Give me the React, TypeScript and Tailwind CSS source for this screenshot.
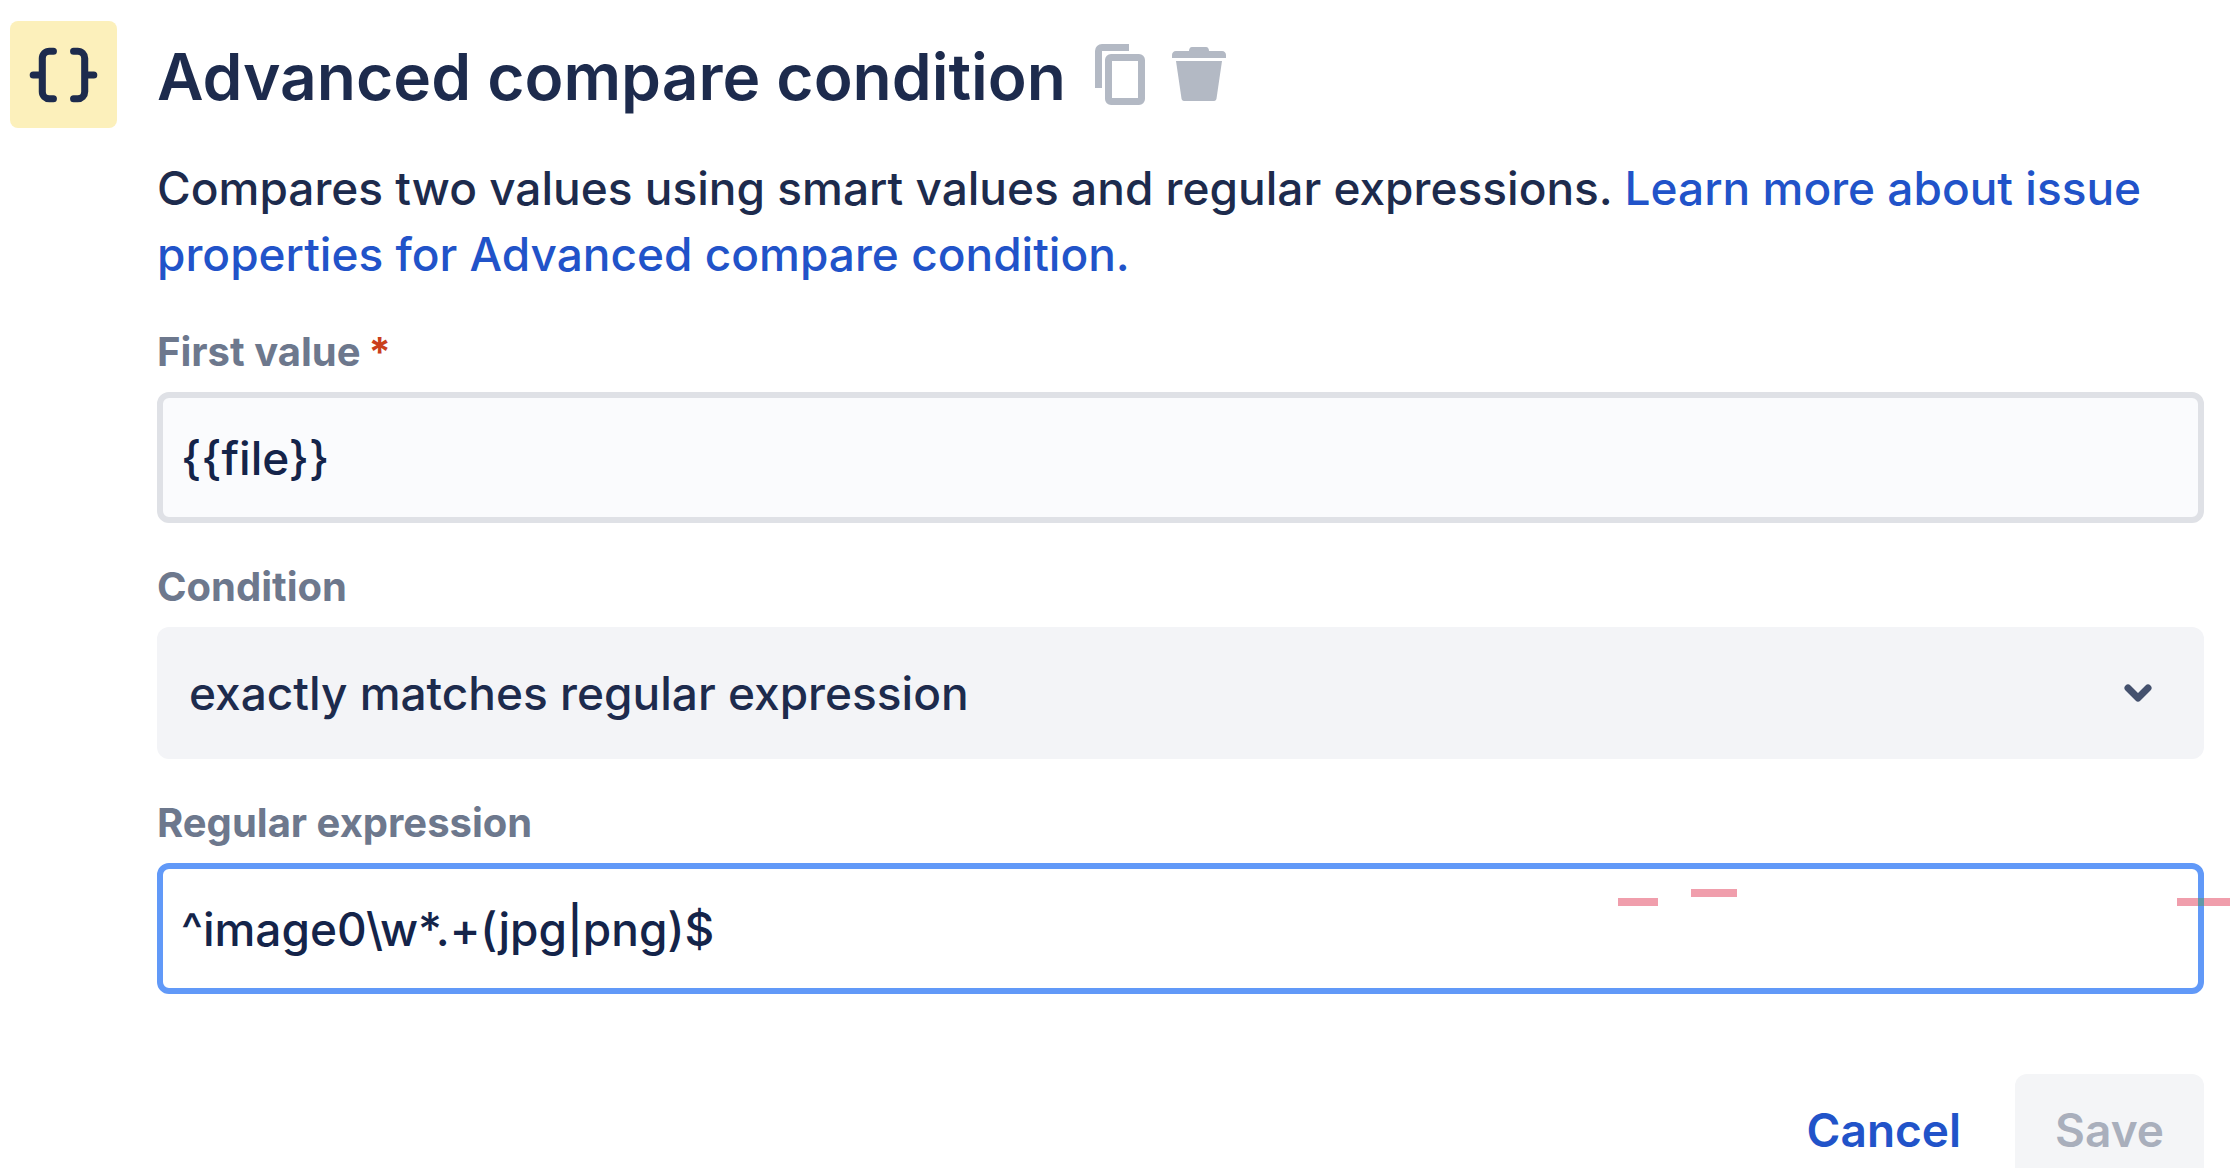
import { useId, type ReactNode } from "react";

function BracesIcon() {
  return (
    <svg viewBox="0 0 106 106" className="size-full" fill="none" stroke="#1d2b4d" strokeWidth="7" strokeLinecap="round" strokeLinejoin="round" aria-hidden="true">
      <path d="M43 30h-4a7 7 0 0 0-7 7v33a7 7 0 0 0 7 7h4M32 53.500H23" />
      <path d="M63 30h4a7 7 0 0 1 7 7v33a7 7 0 0 1-7 7h-4M74 53.500h9" />
    </svg>
  );
}

function CopyIcon() {
  return (
    <svg viewBox="0 0 80 80" className="size-20" fill="#b3b9c4" aria-hidden="true">
      <path d="M22 7h27v7H22v37h-7V14a7 7 0 0 1 7-7z" />
      <path fillRule="evenodd" d="M31 17h28a6 6 0 0 1 6 6v39a6 6 0 0 1-6 6H31a6 6 0 0 1-6-6V23a6 6 0 0 1 6-6zm1 7v37h26V24z" />
    </svg>
  );
}

function TrashIcon() {
  return (
    <svg viewBox="0 0 80 80" className="size-20" fill="#b3b9c4" aria-hidden="true">
      <path d="M29 14c0-2 1-4 3-4h14c2 0 3 2 3 4h13c2.500 0 4 2 4 4v3H12v-3c0-2 1.500-4 4-4z" />
      <path d="M16 24h46l-5.500 37.500c-.3 1.500-1 2.500-2.500 2.500H24c-1.500 0-2.200-1-2.500-2.500z" />
    </svg>
  );
}

function Field({ label, required, children }: { label: string; required?: boolean; children: (id: string) => ReactNode }) {
  const id = useId();
  return (
    <div className="flex flex-col gap-4">
      <label htmlFor={id} className="text-[40px] leading-12 font-bold text-[#6d788d]">
        {label}
        {required && <span className="ml-2 text-[#ca3f1c]">*</span>}
      </label>
      {children(id)}
    </div>
  );
}

const inputClass =
  "h-[131px] w-full rounded-xl border-[6px] px-[18px] text-[46px] font-medium text-[#14244a] outline-none";

export default function App() {
  return (
    <main className="relative flex max-h-screen items-start gap-10 overflow-hidden bg-white pt-[21px] pr-[26px] pl-[10px] font-['Inter',sans-serif] text-[#1d2b4d]">
      <div className="size-[107px] shrink-0 rounded-lg bg-[#fcf0bb]">
        <BracesIcon />
      </div>

      <form className="flex min-w-0 grow flex-col" onSubmit={(e) => e.preventDefault()}>
        <header className="flex h-28 items-center">
          <h1 className="text-[64px] leading-20 font-semibold">Advanced compare condition</h1>
          <div className="ml-3.5 flex">
            <button type="button" aria-label="Duplicate"><CopyIcon /></button>
            <button type="button" aria-label="Delete"><TrashIcon /></button>
          </div>
        </header>

        <p className="mt-[22px] text-[46px] leading-[66px] font-medium">
          Compares two values using smart values and regular expressions.{" "}
          <a href="#learn-more" className="text-[#2153c9]">
            Learn more about issue properties for Advanced compare condition.
          </a>
        </p>

        <div className="mt-[41px] flex flex-col gap-10">
          <Field label="First value" required>
            {(id) => <input id={id} defaultValue="{{file}}" className={`${inputClass} border-[#dfe1e6] bg-[#fafbfd]`} />}
          </Field>
          <Field label="Condition">
            {(id) => (
              <div className="relative flex">
                <select id={id} className="h-[132px] w-full appearance-none rounded-xl bg-[#f3f4f7] px-8 text-[46px] font-medium outline-none">
                  <option>exactly matches regular expression</option>
                </select>
                <svg viewBox="0 0 28 18" className="pointer-events-none absolute top-1/2 right-[52px] h-[18px] w-7 -translate-y-1/2" fill="none" stroke="#44516e" strokeWidth="7" strokeLinecap="round" strokeLinejoin="round" aria-hidden="true">
                  <path d="M4 4l10 10L24 4" />
                </svg>
              </div>
            )}
          </Field>
          <Field label="Regular expression">
            {(id) => <input id={id} defaultValue="^image0\w*.+(jpg|png)$" className={`${inputClass} border-[#6199f8] bg-white`} />}
          </Field>
        </div>

        <div className="mt-20 flex justify-end text-[46px] font-semibold">
          <button type="button" className="h-28 px-[54px] text-[#2153c9]">Cancel</button>
          <button type="submit" disabled className="h-28 rounded-xl bg-[#f4f5f7] px-10 text-[#a9afbc]">Save</button>
        </div>
      </form>

      <span className="absolute top-[898px] right-[572px] h-2 w-10 bg-[#f09eac]" />
      <span className="absolute top-[889px] right-[493px] h-2 w-[46px] bg-[#f09eac]" />
      <span className="absolute top-[898px] right-0 flex h-2 w-[53px] justify-end bg-[#f09eac] pr-[26px]">
        <span className="w-[6px] bg-[#6199a8]" />
      </span>
    </main>
  );
}
